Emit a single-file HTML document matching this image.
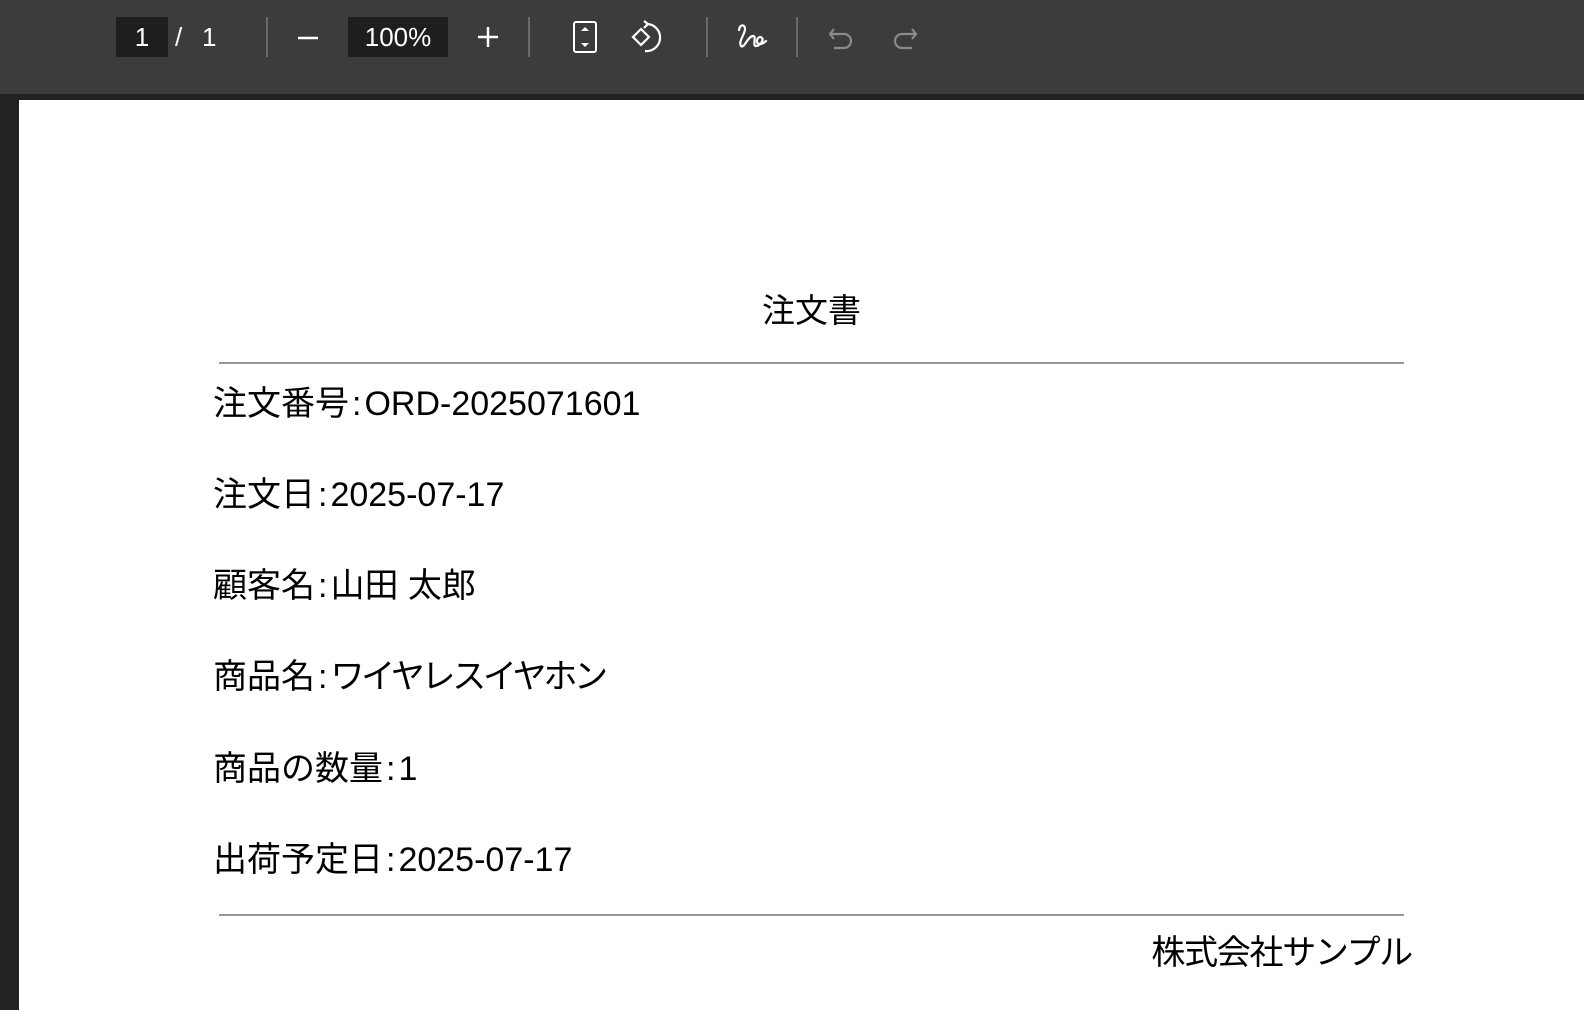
<!DOCTYPE html>
<html><head><meta charset="utf-8"><style>
*{margin:0;padding:0;box-sizing:border-box}
body{width:1584px;height:1010px;overflow:hidden;background:#222;position:relative;font-family:"Liberation Sans","Noto Sans CJK JP",sans-serif}
.tb{position:absolute;left:0;top:0;width:1584px;height:94px;background:#3c3c3c;color:#fff}
.page{position:absolute;left:19px;top:100px;width:1565px;height:910px;background:#fff}
.t{position:absolute;color:#000;white-space:nowrap;line-height:1}
.r{font-size:34px;left:213px}
.c{padding:0 3px}
.box{position:absolute;background:#1e1e1e;color:#fff;font-size:26px;text-align:center;line-height:40px;top:17px;height:40px}
.sep{position:absolute;top:17px;width:2px;height:40px;background:#6a6a6a}
.hr{position:absolute;left:219px;width:1185px;height:2px;background:#999}
svg{position:absolute}
</style></head><body>
<div class="tb">
<div class="box" style="left:116px;width:52px">1</div>
<div class="t" style="left:175px;top:24px;color:#fff;font-size:26px">/</div>
<div class="t" style="left:202px;top:24px;color:#fff;font-size:26px">1</div>
<div class="sep" style="left:266px"></div>
<svg style="left:296px;top:26px" width="24" height="24"><path d="M2 12H22" stroke="#fff" stroke-width="2.5"/></svg>
<div class="box" style="left:348px;width:100px">100%</div>
<svg style="left:476px;top:25px" width="24" height="24"><path d="M2 12H22M12 2V22" stroke="#fff" stroke-width="2.5"/></svg>
<div class="sep" style="left:528px"></div>
<svg style="left:572px;top:20px" width="28" height="34"><rect x="2" y="2" width="22" height="30" rx="2" fill="none" stroke="#fff" stroke-width="2"/><path d="M9 11L13 7L17 11ZM9 23L13 27L17 23Z" fill="#fff"/></svg>
<svg style="left:630px;top:20px" width="40" height="36"><path d="M3 17L11 9L19 17L11 25Z" fill="none" stroke="#fff" stroke-width="2.2"/><path d="M18 4A12 12 0 1 1 15 31M18 4L14 1M18 4L14 8" fill="none" stroke="#fff" stroke-width="2.2"/></svg>
<div class="sep" style="left:706px"></div>
<svg style="left:736px;top:22px" width="34" height="30"><path d="M3 8C4 2 9 2 9 7C9 12 2 20 5 24C8 27 12 14 17 14C21 14 16 24 20 24C24 24 28 18 26 16C22 12 18 22 24 22C27 22 29 20 30 19" fill="none" stroke="#fff" stroke-width="2.2" stroke-linecap="round"/></svg>
<div class="sep" style="left:796px"></div>
<svg style="left:828px;top:25px" width="28" height="26"><path d="M6 4L2 9L6 14M2 9H16A7 7 0 0 1 16 23H6" fill="none" stroke="#8a8a8a" stroke-width="2.2"/></svg>
<svg style="left:892px;top:25px" width="28" height="26"><path d="M20 4L24 9L20 14M24 9H10A7 7 0 0 0 10 23H20" fill="none" stroke="#8a8a8a" stroke-width="2.2"/></svg>
</div>
<div class="page"></div>
<div class="t" style="left:762px;top:294px;font-size:33px">注文書</div>
<div class="hr" style="top:362px"></div>
<div class="t r" style="top:387px">注文番号<span class="c">:</span>ORD-2025071601</div>
<div class="t r" style="top:478px">注文日<span class="c">:</span>2025-07-17</div>
<div class="t r" style="top:569px">顧客名<span class="c">:</span>山田 太郎</div>
<div class="t r" style="top:660px">商品名<span class="c">:</span><span style="letter-spacing:-3.3px">ワイヤレスイヤホン</span></div>
<div class="t r" style="top:752px">商品の数量<span class="c">:</span>1</div>
<div class="t r" style="top:843px">出荷予定日<span class="c">:</span>2025-07-17</div>
<div class="hr" style="top:914px"></div>
<div class="t" style="right:172px;top:936px;font-size:34px;letter-spacing:-1.3px">株式会社サンプル</div>
</body></html>
